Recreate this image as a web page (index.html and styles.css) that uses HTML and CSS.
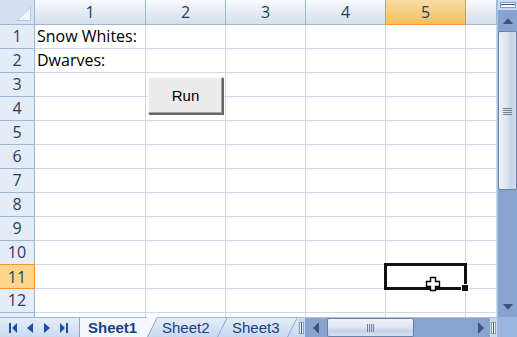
FILE: index.html
```html
<!DOCTYPE html>
<html>
<head>
<meta charset="utf-8">
<link rel="stylesheet" href="styles.css">
</head>
<body>
<div class="app">
  <div class="sheet">
    <div class="grid">
      <div class="corner"><svg width="34" height="24" viewBox="0 0 34 24"><polygon points="30.5,7 30.5,20.5 17,20.5" fill="#f0f4fa" stroke="#b7c9e2" stroke-width="1"/></svg></div>
      <div class="ch">1</div><div class="ch">2</div><div class="ch">3</div><div class="ch">4</div><div class="ch sel">5</div><div class="ch"></div>

      <div class="rh">1</div><div class="c txt">Snow Whites:</div><div class="c"></div><div class="c"></div><div class="c"></div><div class="c"></div><div class="c"></div>
      <div class="rh">2</div><div class="c txt">Dwarves:</div><div class="c"></div><div class="c"></div><div class="c"></div><div class="c"></div><div class="c"></div>
      <div class="rh">3</div><div class="c"></div><div class="c"></div><div class="c"></div><div class="c"></div><div class="c"></div><div class="c"></div>
      <div class="rh">4</div><div class="c"></div><div class="c"></div><div class="c"></div><div class="c"></div><div class="c"></div><div class="c"></div>
      <div class="rh">5</div><div class="c"></div><div class="c"></div><div class="c"></div><div class="c"></div><div class="c"></div><div class="c"></div>
      <div class="rh">6</div><div class="c"></div><div class="c"></div><div class="c"></div><div class="c"></div><div class="c"></div><div class="c"></div>
      <div class="rh">7</div><div class="c"></div><div class="c"></div><div class="c"></div><div class="c"></div><div class="c"></div><div class="c"></div>
      <div class="rh">8</div><div class="c"></div><div class="c"></div><div class="c"></div><div class="c"></div><div class="c"></div><div class="c"></div>
      <div class="rh">9</div><div class="c"></div><div class="c"></div><div class="c"></div><div class="c"></div><div class="c"></div><div class="c"></div>
      <div class="rh">10</div><div class="c"></div><div class="c"></div><div class="c"></div><div class="c"></div><div class="c"></div><div class="c"></div>
      <div class="rh sel">11</div><div class="c"></div><div class="c"></div><div class="c"></div><div class="c"></div><div class="c"></div><div class="c"></div>
      <div class="rh">12</div><div class="c"></div><div class="c"></div><div class="c"></div><div class="c"></div><div class="c"></div><div class="c"></div>
      <div class="rh"></div><div class="c"></div><div class="c"></div><div class="c"></div><div class="c"></div><div class="c"></div><div class="c"></div>
    </div>
    <button class="run">Run</button>
    <div class="selbox"></div>
    <div class="handle"></div>
    <svg class="cursor" width="17" height="17" viewBox="0 0 17 17"><path d="M5.5 1.5h5v4h4v5h-4v4h-5v-4h-4v-5h4z" fill="#fff" stroke="#000" stroke-width="1.4"/></svg>
  </div>

  <div class="vscroll">
    <div class="vsplit"><div class="splitbox"></div></div>
    <div class="vbtn"><svg width="12" height="8" viewBox="0 0 12 8"><polygon points="6,1 11,7 1,7" fill="#3f5276"/></svg></div>
    <div class="vthumb"><svg width="9" height="8" viewBox="0 0 9 8"><path d="M0 1.5h9M0 3.5h9M0 5.5h9M0 7.5h9" stroke="#6d7f9c" stroke-width="1"/></svg></div>
    <div class="vtrack"></div>
    <div class="vbtn"><svg width="12" height="8" viewBox="0 0 12 8"><polygon points="1,1 11,1 6,7" fill="#3f5276"/></svg></div>
  </div>

  <div class="bottom">
    <div class="nav">
      <svg width="8" height="10" viewBox="0 0 8 10"><rect x="0" y="0" width="2" height="10" fill="#1f4e9e"/><polygon points="8,0 8,10 3,5" fill="#1f4e9e"/></svg>
      <svg width="6" height="10" viewBox="0 0 6 10"><polygon points="6,0 6,10 0,5" fill="#1f4e9e"/></svg>
      <svg width="6" height="10" viewBox="0 0 6 10"><polygon points="0,0 0,10 6,5" fill="#1f4e9e"/></svg>
      <svg width="8" height="10" viewBox="0 0 8 10"><polygon points="0,0 0,10 5,5" fill="#1f4e9e"/><rect x="6" y="0" width="2" height="10" fill="#1f4e9e"/></svg>
    </div>
    <div class="tabs">
      <div class="tab active">Sheet1</div>
      <svg class="sep" width="11" height="20" viewBox="0 0 11 20"><polygon points="0,0 10.5,0 0,20" fill="#f4f8fd"/><path d="M0.5 20L10.5 0" stroke="#8aa5cc" stroke-width="1"/></svg>
      <div class="tab">Sheet2</div>
      <svg class="sep" width="11" height="20" viewBox="0 0 11 20"><path d="M0.5 20L10.5 0" stroke="#8aa5cc" stroke-width="1"/></svg>
      <div class="tab">Sheet3</div>
      <svg class="sep" width="11" height="20" viewBox="0 0 11 20"><path d="M0.5 20L10.5 0" stroke="#8aa5cc" stroke-width="1"/></svg>
    </div>
    <div class="hscroll">
      <div class="hsplit"><div class="hsplitbox"></div></div>
      <div class="hbtn left"><svg width="8" height="12" viewBox="0 0 8 12"><polygon points="7,0 7,12 1,6" fill="#3f5276"/></svg></div>
      <div class="hthumb"><svg width="8" height="8" viewBox="0 0 8 8"><path d="M0.5 0v8M2.5 0v8M4.5 0v8M6.5 0v8" stroke="#6d7f9c" stroke-width="1"/></svg></div>
      <div class="htrack"></div>
      <div class="hbtn right"><svg width="8" height="12" viewBox="0 0 8 12"><polygon points="1,0 1,12 7,6" fill="#3f5276"/></svg></div>
      <div class="hsplit"><div class="hsplitbox"></div></div>
    </div>
    <div class="bcorner"></div>
  </div>
</div>
</body>
</html>
```

FILE: styles.css
```css
* { box-sizing: border-box; }
html, body { margin: 0; padding: 0; background: #fff; }
.app {
  width: 517px;
  height: 337px;
  display: grid;
  grid-template-columns: 497px 20px;
  grid-template-rows: 317px 20px;
  overflow: hidden;
}
.sheet { position: relative; overflow: hidden; background: #fff; }
.grid {
  display: grid;
  grid-template-columns: 35px 111px 80px 80px 80px 80px 31px;
  grid-template-rows: 25px;
  grid-auto-rows: 24px;
  font-family: "Open Sans", "Liberation Sans", sans-serif;
  font-size: 16px;
}
.grid > div { border-right: 1px solid #d0d7e5; border-bottom: 1px solid #d0d7e5; }
.corner {
  background: #d5e1f1;
  border-right: 1px solid #9eb6ce !important;
  border-bottom: 1px solid #9eb6ce !important;
}
.corner svg { display: block; }
.ch {
  background: linear-gradient(#f9fbfd, #e4eaf3 55%, #d6dfeb);
  border-right: 1px solid #9eb6ce !important;
  border-bottom: 1px solid #9eb6ce !important;
  color: #263d5b;
  text-align: center;
  line-height: 24px;
}
.ch.sel {
  background: linear-gradient(#f9dca3, #f6cd7f 55%, #f1c15f);
  border: 1px solid #f29536 !important;
  border-top: 0 !important;
  margin-left: -1px;
}
.rh {
  background: #e4ecf7;
  border-right: 1px solid #9eb6ce !important;
  border-bottom: 1px solid #9eb6ce !important;
  color: #263d5b;
  text-align: center;
  line-height: 23px;
}
.rh.sel {
  background: #ffd58d;
  border: 1px solid #f29536 !important;
  border-left: 0 !important;
  margin-top: -1px;
  line-height: 24px;
}
.c { background: #fff; }
.txt { padding-left: 2px; line-height: 23px; white-space: nowrap; color: #000; }

.run {
  position: absolute;
  left: 148px;
  top: 77px;
  width: 75px;
  height: 37px;
  margin: 0;
  padding: 0;
  background: #ececec;
  border: 1px solid;
  border-color: #fbfbfb #666 #666 #fbfbfb;
  box-shadow: 1px 1px 0 #666, inset -1px -1px 0 #a0a0a0;
  font-family: "Liberation Sans", sans-serif;
  font-size: 15px;
  color: #000;
}
.selbox {
  position: absolute;
  left: 384px;
  top: 263px;
  width: 83px;
  height: 27px;
  border: 3px solid #111;
}
.handle {
  position: absolute;
  left: 462px;
  top: 285px;
  width: 6px;
  height: 6px;
  background: #111;
  box-shadow: 0 0 0 1px #fff;
}
.cursor { position: absolute; left: 425px; top: 276px; }

/* vertical scrollbar */
.vscroll {
  display: flex;
  flex-direction: column;
  background: #86a4cf;
  border-left: 1px solid #a9c1e2;
}
.vsplit {
  height: 10px;
  background: #c8d8ee;
  display: flex;
  align-items: center;
  justify-content: center;
}
.splitbox {
  width: 16px;
  height: 6px;
  background: #fff;
  border: 1px solid #7f9cc8;
  box-shadow: inset 0 -2px 0 #fff, inset 0 -3px 0 #3b4f74;
}
.vbtn {
  height: 21px;
  display: flex;
  align-items: center;
  justify-content: center;
}
.vthumb {
  height: 159px;
  border: 1px solid #6a83ad;
  border-radius: 2px;
  background: linear-gradient(to right, #eef2f8, #dfe6f1 45%, #c6d3e6 70%, #d6dfed);
  display: flex;
  align-items: center;
  justify-content: center;
}
.vtrack { flex: 1; }

/* bottom bar */
.bottom {
  grid-column: 1 / 3;
  display: flex;
  height: 20px;
  font-family: "Liberation Sans", sans-serif;
}
.nav {
  width: 80px;
  display: flex;
  align-items: center;
  justify-content: space-between;
  padding: 0 11px 0 9px;
  background: linear-gradient(#e4edf8, #cbdaf0);
  border-top: 1px solid #9fb6d8;
  border-right: 1px solid #8aa5cc;
}
.nav svg { display: block; }
.tabs {
  display: flex;
  height: 20px;
  background: linear-gradient(#e5eef9, #c7d8ef);
  border-top: 1px solid #9fb6d8;
}
.tab {
  height: 19px;
  font-size: 15px;
  line-height: 19px;
  color: #1b3e84;
  white-space: nowrap;
}
.tab.active {
  width: 67px;
  padding-left: 8px;
  font-weight: bold;
  background: #f4f8fd;
  color: #1a3d86;
}
.tabs .tab:nth-of-type(2) { width: 59px; padding-left: 4px; }
.tabs .tab:nth-of-type(3) { width: 59px; padding-left: 4px; }
.sep { display: block; margin-top: -1px; }
.hscroll {
  flex: 1;
  display: flex;
  background: #86a4cf;
  border-top: 1px solid #a9c1e2;
}
.hsplit {
  width: 7px;
  display: flex;
  align-items: center;
  justify-content: center;
  background: #c8d8ee;
}
.hsplitbox {
  width: 5px;
  height: 12px;
  background: #fff;
  border: 1px solid #7f9cc8;
  box-shadow: inset 1px 0 0 #fff, inset 2px 0 0 #3b4f74;
}
.hbtn {
  width: 22px;
  display: flex;
  align-items: center;
  justify-content: center;
}
.hbtn.right { width: 18px; }
.hthumb {
  width: 87px;
  border: 1px solid #6a83ad;
  border-radius: 2px;
  background: linear-gradient(#eef2f8, #dfe6f1 45%, #c6d3e6 70%, #d6dfed);
  display: flex;
  align-items: center;
  justify-content: center;
}
.htrack { flex: 1; }
.bcorner { width: 20px; background: #9bb6dd; }
```
